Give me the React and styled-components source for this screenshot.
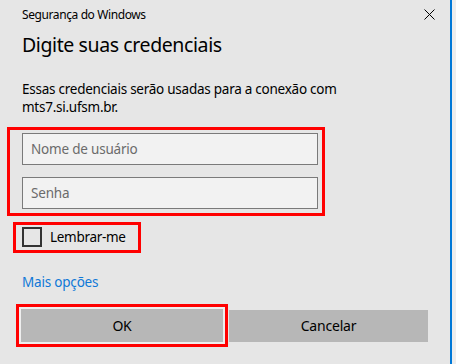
import React from "react";
import styled, { createGlobalStyle } from "styled-components";

const GlobalStyle = createGlobalStyle`
  html, body {
    margin: 0;
    padding: 0;
    background: #ededed;
  }
  body {
    font-family: "Noto Sans", "Open Sans", sans-serif;
  }
`;

const Dialog = styled.div`
  width: 452px;
  height: 364px;
  box-sizing: border-box;
  background: #e6e6e6;
  border-right: 2px solid #0078d7;
  padding: 7px 0 0 22px;
  display: flex;
  flex-direction: column;
  align-items: flex-start;
  color: #000;
`;

const TitleBar = styled.div`
  align-self: stretch;
  display: flex;
  align-items: center;
  justify-content: space-between;
  padding-right: 15px;
  height: 16px;
`;

const Caption = styled.span`
  font-size: 12px;
  line-height: 16px;
  letter-spacing: -0.4px;
  color: #000;
`;

const CloseButton = styled.button`
  border: 0;
  background: transparent;
  padding: 0;
  width: 12px;
  height: 12px;
  display: flex;
  align-items: center;
  justify-content: center;
  margin-top: -2px;
`;

const Heading = styled.h1`
  margin: 8px 0 0;
  font-size: 19.5px;
  line-height: 28px;
  letter-spacing: -0.4px;
  font-weight: 400;
  color: #000;
`;

const Message = styled.p`
  margin: 22px 0 0;
  font-size: 13.5px;
  line-height: 17.5px;
  letter-spacing: -0.25px;
  color: #000;
`;

const Highlight = styled.div`
  border: 3px solid #ff0000;
  margin: ${(p) => p.$margin};
  padding: ${(p) => p.$padding};
  display: flex;
  flex-direction: column;
  gap: 12px;
`;

const Field = styled.input`
  width: 296px;
  height: 32px;
  box-sizing: border-box;
  border: 1px solid #7a7a7a;
  background: #f2f2f2;
  padding: 0 8px;
  font-family: inherit;
  font-size: 13.5px;
  letter-spacing: -0.2px;
  color: #000;
  outline: none;

  &::placeholder {
    color: #6b6b6b;
  }
`;

const CheckLabel = styled.label`
  display: flex;
  align-items: center;
  gap: 8px;
  font-size: 13.5px;
  letter-spacing: -0.3px;
  line-height: 20px;
`;

const Box = styled.span`
  width: 20px;
  height: 20px;
  box-sizing: border-box;
  border: 2px solid #333;
  background: transparent;
`;

const Link = styled.a`
  margin-top: 19px;
  font-size: 13.5px;
  letter-spacing: -0.2px;
  line-height: 20px;
  color: #0f78d7;
  text-decoration: none;
`;

const ButtonRow = styled.div`
  margin: 15px 0 0 -3px;
  display: flex;
  align-items: center;
  gap: 4px;
`;

const Button = styled.button`
  width: ${(p) => (p.$focused ? "206px" : "199px")};
  height: ${(p) => (p.$focused ? "37px" : "32px")};
  box-sizing: border-box;
  background: #b7b7b7;
  border: ${(p) => (p.$focused ? "2px solid #eeeeee" : "0")};
  outline: ${(p) => (p.$focused ? "3px solid #ff0000" : "none")};
  font-family: inherit;
  font-size: 14px;
  letter-spacing: -0.2px;
  color: #000;
  padding: 0;
`;

export default function App() {
  return (
    <>
      <GlobalStyle />
      <Dialog>
        <TitleBar>
          <Caption>Segurança do Windows</Caption>
          <CloseButton aria-label="Fechar">
            <svg width="11" height="11" viewBox="0 0 11 11">
              <path d="M0.5 0.5 L10.5 10.5 M10.5 0.5 L0.5 10.5" stroke="#000" strokeWidth="1" fill="none" />
            </svg>
          </CloseButton>
        </TitleBar>
        <Heading>Digite suas credenciais</Heading>
        <Message>
          Essas credenciais serão usadas para a conexão com
          <br />
          mts7.si.ufsm.br.
        </Message>
        <Highlight $margin="11px 0 0 -15px" $padding="3px 4px 4px 12px">
          <Field placeholder="Nome de usuário" />
          <Field placeholder="Senha" type="password" />
        </Highlight>
        <Highlight $margin="6px 0 0 -9px" $padding="2px 12px 3px 6px">
          <CheckLabel>
            <Box />
            Lembrar-me
          </CheckLabel>
        </Highlight>
        <Link href="#">Mais opções</Link>
        <ButtonRow>
          <Button $focused>OK</Button>
          <Button>Cancelar</Button>
        </ButtonRow>
      </Dialog>
    </>
  );
}
